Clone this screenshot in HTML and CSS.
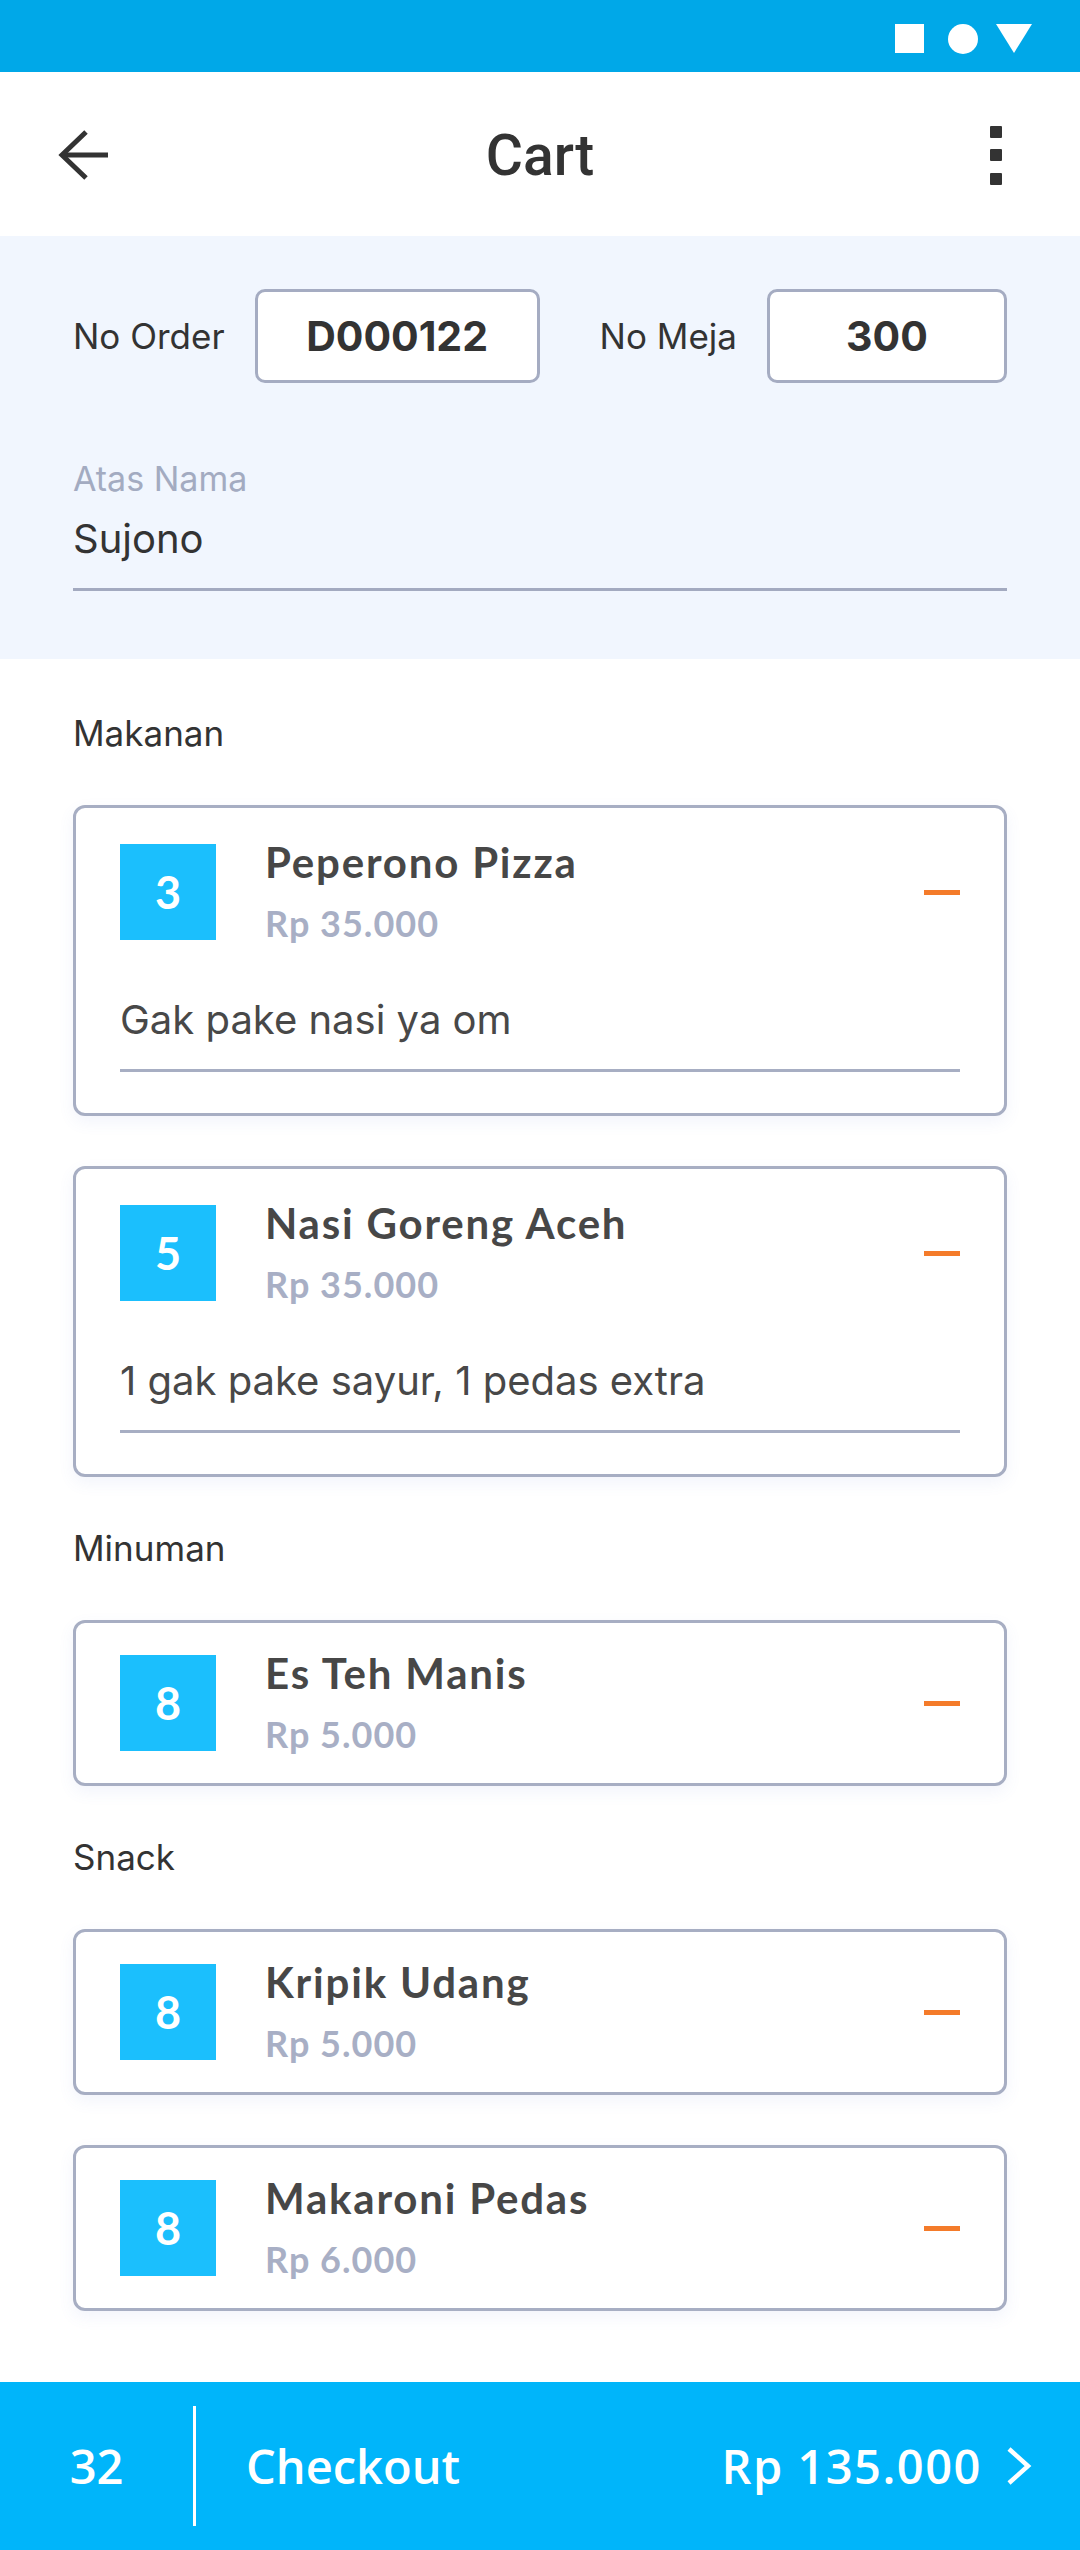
FILE: index.html
```html
<!DOCTYPE html>
<html lang="id">
<head>
    <meta charset="UTF-8">
    <meta name="viewport" content="width=device-width, initial-scale=1.0">
    <title>Cart</title>
    <link rel="stylesheet" href="styles.css">
</head>
<body>
    <div class="screen">
        <div class="status-bar">
            <span class="status-square"></span>
            <span class="status-circle"></span>
            <svg class="status-triangle" width="36" height="29" viewBox="0 0 36 29"><polygon points="0,0 36,0 18,29" fill="#fff"/></svg>
        </div>

        <header class="app-bar">
            <div class="app-bar-left">
                <svg width="52" height="52" viewBox="0 0 52 52" fill="none" stroke="#333" stroke-width="5">
                    <path d="M4 26 H50"/>
                    <path d="M28 3 L4 26 L28 49"/>
                </svg>
            </div>
            <h1 class="app-title">Cart</h1>
            <div class="app-bar-right">
                <svg width="12" height="59" viewBox="0 0 12 59" fill="#333">
                    <rect x="0" y="0" width="12" height="12" rx="1"/>
                    <rect x="0" y="23" width="12" height="12" rx="1"/>
                    <rect x="0" y="47" width="12" height="12" rx="1"/>
                </svg>
            </div>
        </header>

        <section class="order-info">
            <div class="order-row">
                <span class="field-label">No Order</span>
                <div class="field-box order-no">D000122</div>
                <span class="field-label table-label">No Meja</span>
                <div class="field-box table-no">300</div>
            </div>
            <div class="name-field">
                <div class="name-label">Atas Nama</div>
                <div class="name-value">Sujono</div>
            </div>
        </section>

        <main class="cart-list" id="cartList">
            <!-- isi keranjang diisi dari data -->
        </main>

        <footer class="checkout-bar">
            <div class="checkout-count">32</div>
            <div class="checkout-divider"></div>
            <div class="checkout-label">Checkout</div>
            <div class="checkout-total">Rp 135.000</div>
            <svg class="checkout-arrow" width="26" height="38" viewBox="0 0 26 38" fill="none" stroke="#fff" stroke-width="4.5">
                <path d="M3 2 L22 19 L3 36"/>
            </svg>
        </footer>
    </div>

    <script>
        const cart = [
            { category: "Makanan", items: [
                { qty: 3, name: "Peperono Pizza", price: "Rp 35.000", note: "Gak pake nasi ya om" },
                { qty: 5, name: "Nasi Goreng Aceh", price: "Rp 35.000", note: "1 gak pake sayur, 1 pedas extra" }
            ]},
            { category: "Minuman", items: [
                { qty: 8, name: "Es Teh Manis", price: "Rp 5.000" }
            ]},
            { category: "Snack", items: [
                { qty: 8, name: "Kripik Udang", price: "Rp 5.000" },
                { qty: 8, name: "Makaroni Pedas", price: "Rp 6.000" }
            ]}
        ];

        function renderCart(data) {
            const list = document.getElementById("cartList");
            list.innerHTML = "";

            data.forEach(group => {
                const heading = document.createElement("h2");
                heading.className = "category";
                heading.textContent = group.category;
                list.appendChild(heading);

                group.items.forEach(item => {
                    const card = document.createElement("div");
                    card.className = item.note ? "cart-item has-note" : "cart-item";
                    card.innerHTML = `
                        <div class="item-row">
                            <div class="item-qty">${item.qty}</div>
                            <div class="item-info">
                                <div class="item-name">${item.name}</div>
                                <div class="item-price">${item.price}</div>
                            </div>
                            <span class="item-minus"></span>
                        </div>
                        ${item.note ? `<div class="item-note">${item.note}</div>` : ""}
                    `;
                    list.appendChild(card);
                });
            });
        }

        renderCart(cart);
    </script>
</body>
</html>
```

FILE: styles.css
```css
/* Dasar */
body {
    margin: 0;
    padding: 0;
    font-family: "Inter", "Liberation Sans", sans-serif;
    color: #333;
    background-color: #fff;
}

.screen {
    display: flex;
    flex-direction: column;
    min-height: 100vh;
}

/* Status bar */
.status-bar {
    height: 72px;
    box-sizing: border-box;
    background-color: #00a8e8;
    display: flex;
    justify-content: flex-end;
    align-items: flex-start;
    padding: 24px 48px 0 0;
}

.status-square {
    width: 29px;
    height: 29px;
    background-color: #fff;
}

.status-circle {
    width: 30px;
    height: 30px;
    border-radius: 50%;
    background-color: #fff;
    margin-left: 24px;
}

.status-triangle {
    margin-left: 18px;
}

/* App bar */
.app-bar {
    height: 164px;
    display: grid;
    grid-template-columns: 1fr auto 1fr;
    align-items: center;
    padding-top: 2px;
    box-sizing: border-box;
}

.app-bar-left {
    padding-left: 58px;
    display: flex;
}

.app-bar-right {
    justify-self: end;
    padding-right: 78px;
    display: flex;
}

.app-title {
    margin: 0;
    font-family: "Roboto", sans-serif;
    font-weight: 500;
    font-size: 57px;
    color: #333;
}

/* Info order */
.order-info {
    background-color: #f1f6fe;
    padding: 53px 73px 68px;
}

.order-row {
    display: flex;
    align-items: center;
    height: 94px;
}

.field-label {
    font-size: 35px;
    color: #333;
    margin-right: 30px;
}

.table-label {
    margin-left: 60px;
}

.field-box {
    height: 94px;
    box-sizing: border-box;
    border: 3px solid #a5acc2;
    border-radius: 10px;
    background-color: #fff;
    display: flex;
    align-items: center;
    justify-content: center;
    font-weight: 700;
    font-size: 41px;
    color: #333;
}

.order-no {
    width: 285px;
}

.table-no {
    flex: 1;
}

.name-field {
    margin-top: 76px;
}

.name-label {
    font-size: 34px;
    line-height: 40px;
    color: #a3abc1;
}

.name-value {
    margin-top: 16px;
    font-size: 40px;
    line-height: 48px;
    color: #333;
    padding-bottom: 25px;
    border-bottom: 3px solid #a3aac0;
}

/* Daftar keranjang */
.cart-list {
    padding: 53px 73px 0;
    display: flex;
    flex-direction: column;
    gap: 50px;
}

.category {
    margin: 0;
    font-weight: 400;
    font-size: 35px;
    line-height: 43px;
    color: #333;
}

.cart-item {
    border: 3px solid #a7aec3;
    border-radius: 12px;
    background-color: #fff;
    padding: 32px 44px;
    box-shadow: 0 6px 16px rgba(90, 120, 200, 0.08);
}

.cart-item.has-note {
    padding-top: 36px;
    padding-bottom: 41px;
}

.item-row {
    display: flex;
    align-items: center;
}

.item-qty {
    width: 96px;
    height: 96px;
    background-color: #1bbffd;
    color: #fff;
    font-family: "Lato", sans-serif;
    font-weight: 700;
    font-size: 45px;
    display: flex;
    align-items: center;
    justify-content: center;
}

.item-info {
    flex: 1;
    margin-left: 49px;
    height: 96px;
    margin-top: -4px;
    display: flex;
    flex-direction: column;
    justify-content: space-between;
    font-family: "Lato", sans-serif;
    font-weight: 700;
}

.item-name {
    font-size: 42px;
    line-height: 40px;
    letter-spacing: 1.8px;
    color: #474747;
}

.item-price {
    font-size: 36px;
    line-height: 30px;
    letter-spacing: 1px;
    color: #a8afc5;
}

.item-minus {
    width: 36px;
    height: 5px;
    background-color: #f47b2a;
}

.item-note {
    margin-top: 56px;
    font-size: 40px;
    line-height: 48px;
    color: #484848;
    padding-bottom: 25px;
    border-bottom: 3px solid #a7aec3;
}

/* Checkout */
.checkout-bar {
    margin-top: auto;
    height: 168px;
    background-color: #00b5fa;
    display: flex;
    align-items: center;
    color: #fff;
    font-family: "Open Sans", sans-serif;
    font-weight: 600;
    font-size: 47px;
    padding-right: 48px;
}

.checkout-count {
    width: 193px;
    text-align: center;
}

.checkout-divider {
    width: 3px;
    height: 120px;
    background-color: #fff;
}

.checkout-label {
    padding-left: 50px;
}

.checkout-total {
    margin-left: auto;
    letter-spacing: 1.5px;
}

.checkout-arrow {
    margin-left: 24px;
}
```
